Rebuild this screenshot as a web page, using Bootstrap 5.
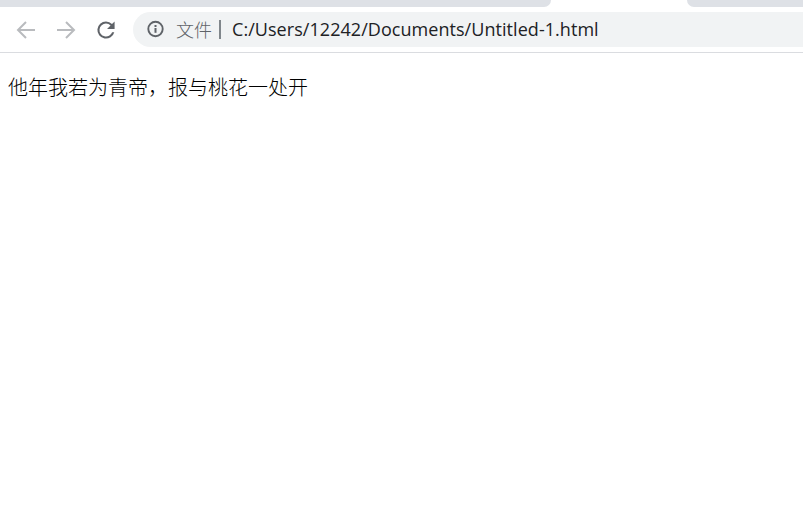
<!DOCTYPE html>
<html lang="zh">
<head>
<meta charset="utf-8">
<title>Untitled-1</title>
<link href="https://cdn.jsdelivr.net/npm/bootstrap@5.3.0/dist/css/bootstrap.min.css" rel="stylesheet">
<style>
html, body { height: 100%; background: #fff; overflow: hidden; }
.strip { height: 7px; }
.strip-l { width: 551px; background: #dee1e6; border-bottom-right-radius: 8px; }
.strip-gap { width: 136px; }
.strip-r { background: #dee1e6; border-bottom-left-radius: 8px; }
.tools { height: 46px; border-bottom: 1px solid #dadce0; padding-left: 14px; }
.ico { width: 24px; height: 24px; flex: none; display: block; }
.ico + .ico { margin-left: 16px; }
.omni { margin-left: 15px; height: 35px; margin-top: -1px; background: #f1f3f4; border-radius: 17.5px 0 0 17.5px; padding-left: 13px; font-size: 18px; white-space: nowrap; }
.info { width: 20px; height: 20px; flex: none; }
.scheme { margin-left: 10px; color: #5f6368; font-family: "Noto Sans CJK SC", sans-serif; font-size: 18px; font-weight: 300; margin-left: 10px; }
.sep { width: 2px; height: 19px; background: #80868b; margin-left: 7px; margin-right: 11px; }
.addr { color: #202124; font-family: "Open Sans", sans-serif; font-size: 18px; letter-spacing: .05px; }
.verse { margin: 21px 0 0 8px; font-family: "Noto Sans CJK SC", sans-serif; font-size: 20px; font-weight: 300; line-height: 26px; color: #000; }
</style>
</head>
<body>
<div class="d-flex strip">
  <div class="strip-l"></div>
  <div class="strip-gap"></div>
  <div class="strip-r flex-grow-1"></div>
</div>
<div class="d-flex align-items-center tools">
  <svg class="ico" viewBox="0 0 24 24" fill="none" stroke="#b9bbbe" stroke-width="2"><path d="M21 12H4.5M12 4l-8 8 8 8"/></svg>
  <svg class="ico" viewBox="0 0 24 24" fill="none" stroke="#b9bbbe" stroke-width="2"><path d="M3 12h16.5M12 4l8 8-8 8"/></svg>
  <svg class="ico" viewBox="0 0 24 24"><path fill="#5f6368" d="M18 6a8.6 8.6 0 0 0-6-2.6 8.6 8.6 0 1 0 8.3 10.8h-2.2A6.5 6.5 0 1 1 12 5.5c1.8 0 3.4.74 4.55 1.95L13 11h7.6V3.4L18 6z"/></svg>
  <div class="omni d-flex align-items-center flex-grow-1">
    <svg class="info" viewBox="0 0 20 20" fill="none"><circle cx="9.5" cy="10" r="7.2" stroke="#5f6368" stroke-width="1.9"/><rect x="8.5" y="9" width="2" height="4.8" fill="#5f6368"/><rect x="8.5" y="6" width="2" height="2" fill="#5f6368"/></svg>
    <span class="scheme">文件</span>
    <span class="sep"></span>
    <span class="addr">C:/Users/12242/Documents/Untitled-1.html</span>
  </div>
</div>
<p class="verse">他年我若为青帝，报与桃花一处开</p>
</body>
</html>
